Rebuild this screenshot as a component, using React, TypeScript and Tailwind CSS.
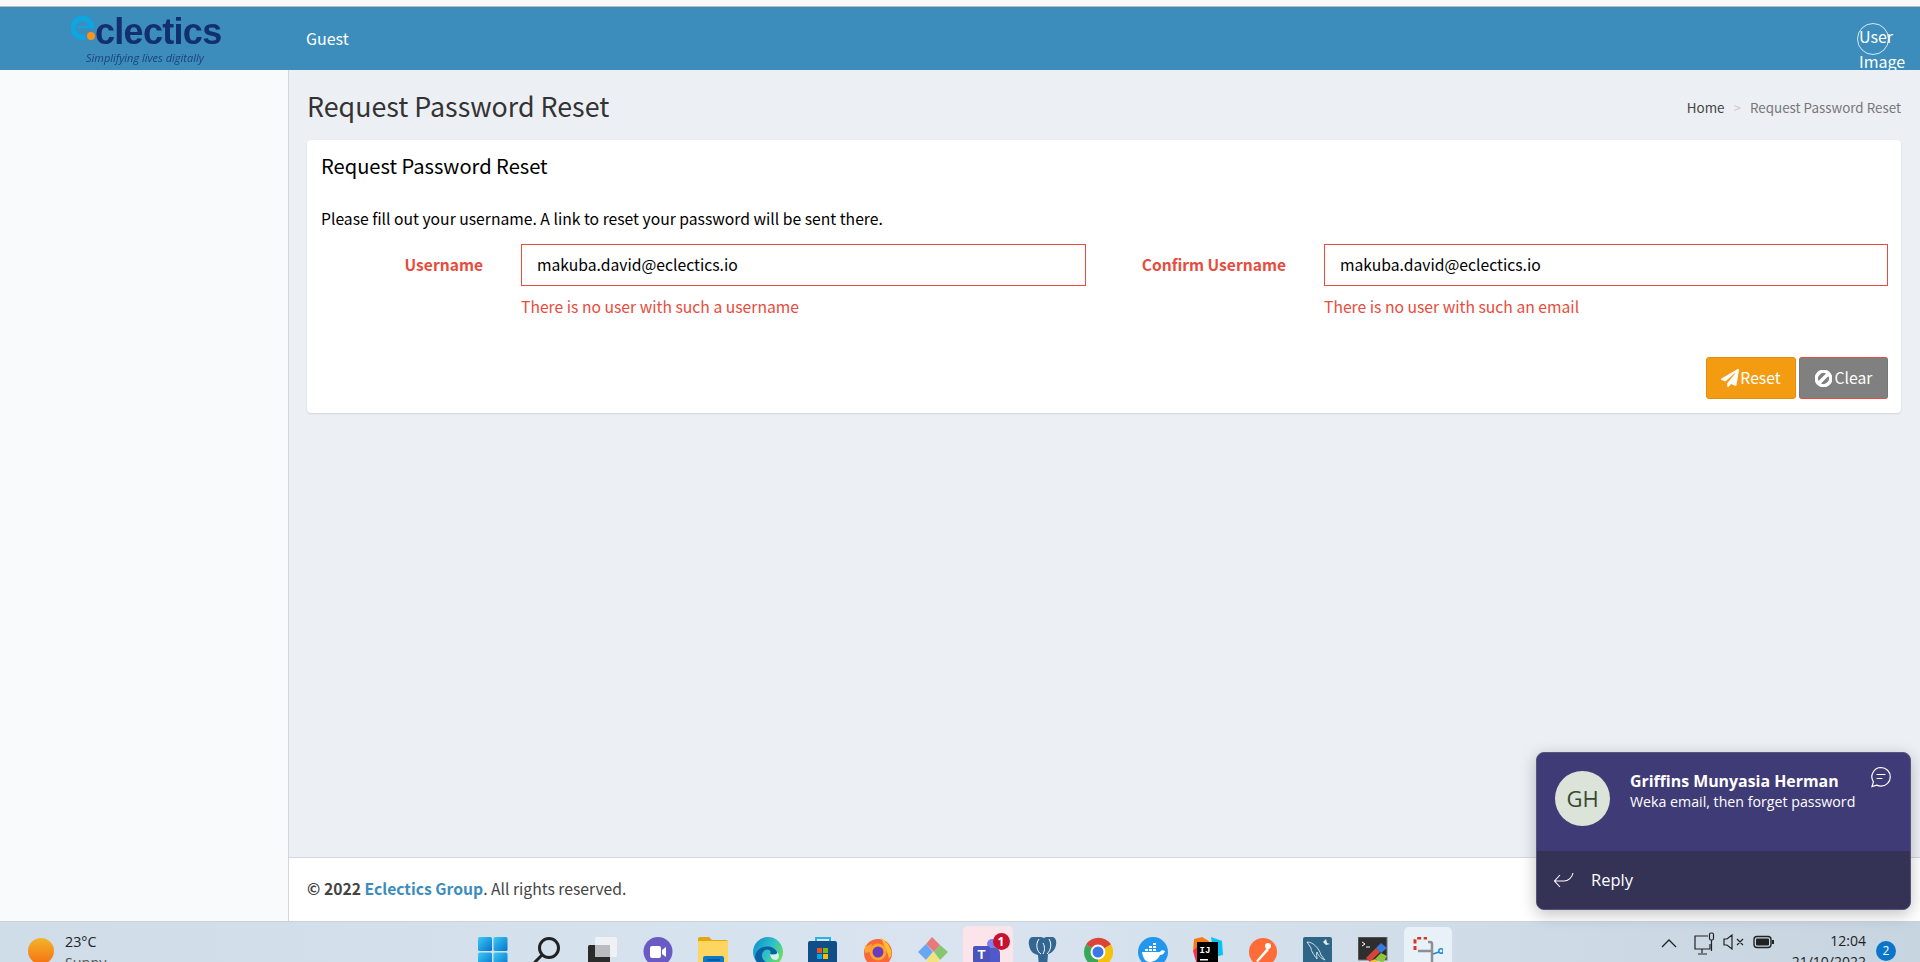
import { FaPaperPlane, FaBan } from "react-icons/fa";

function Logo() {
  return (
    <div className="w-[288px] h-full shrink-0 relative">
      <svg className="absolute left-[71px] top-[8px]" width="26" height="27" viewBox="0 0 26 27">
        <path d="M21 12H7" fill="none" stroke="#0ea5e0" strokeWidth="2.5" />
        <path d="M21 13A9.5 9.5 0 1 0 14 22" fill="none" stroke="#0ea5e0" strokeWidth="5.5" />
        <circle cx="20" cy="21" r="4" fill="#f7941d" />
      </svg>
      <span className="absolute left-[95px] top-[3px] font-['Liberation_Sans',sans-serif] font-bold text-[36px] leading-[44px] tracking-[-0.7px] text-[#12306e] blur-[0.4px]">
        clectics
      </span>
      <span className="absolute left-[86px] top-[44px] font-['Open_Sans',sans-serif] italic text-[11px] leading-[14px] text-[#1c4178] blur-[0.3px]">
        Simplifying lives digitally
      </span>
    </div>
  );
}

function Header() {
  return (
    <header className="h-[63px] shrink-0 bg-[#3c8dbc] flex items-center text-white">
      <Logo />
      <span className="ml-[18px] mb-[2px] text-[16px] leading-[24px]">Guest</span>
      <div className="ml-auto mr-[31px] mb-[-1px] w-[32px] h-[32px] rounded-full border border-white/80 text-[16px] leading-[25px] pl-[1px]">
        User Image
      </div>
    </header>
  );
}

function Field({ label, value, error, labelWidth }: { label: string; value: string; error: string; labelWidth: string }) {
  return (
    <div className="flex">
      <label className={`${labelWidth} mr-[38px] h-[42px] flex items-center justify-end font-bold text-[15.6px] text-[#e74c3c]`}>
        {label}
      </label>
      <div className="flex-1">
        <input
          readOnly
          value={value}
          className="w-full h-[42px] border border-[#e74c3c] pl-[15px] pb-[1px] text-[15.7px] text-black outline-none"
        />
        <div className="mt-[9px] text-[15.7px] leading-[24px] text-[#e74c3c]">{error}</div>
      </div>
    </div>
  );
}

function Content() {
  return (
    <div className="flex-1 flex flex-col min-w-0 bg-[#ecf0f5]">
      <div className="flex-1 px-[18px] pr-[19px]">
        <div className="h-[70px] flex items-center justify-between">
          <h1 className="text-[26.8px] leading-[36px] mt-[2px] text-[#333]">Request Password Reset</h1>
          <div className="flex items-center text-[13.4px] mt-[4px]">
            <span className="text-[#444]">Home</span>
            <span className="mx-[9px] text-[#ccc]">&gt;</span>
            <span className="text-[#777]">Request Password Reset</span>
          </div>
        </div>
        <div className="bg-white rounded-[4px] shadow-[0_1px_2px_rgba(0,0,0,0.12)] pl-[14px] pr-[13px] pt-[13px] pb-[14px]">
          <h3 className="text-[20.1px] leading-[26px] text-black">Request Password Reset</h3>
          <p className="mt-[28px] mb-[13px] text-[15.7px] leading-[24px] text-black">
            Please fill out your username. A link to reset your password will be sent there.
          </p>
          <div className="grid grid-cols-2 gap-x-[37px]">
            <Field labelWidth="w-[162px]" label="Username" value="makuba.david@eclectics.io" error="There is no user with such a username" />
            <Field labelWidth="w-[163px]" label="Confirm Username" value="makuba.david@eclectics.io" error="There is no user with such an email" />
          </div>
          <div className="mt-[38px] flex justify-end gap-[3px] text-white text-[15.7px]">
            <button className="w-[90px] h-[42px] rounded-[3px] bg-[#f39c12] border border-[#e08e0b] flex items-center justify-center">
              <FaPaperPlane className="w-[18px] h-[18px] mr-[1px]" />
              Reset
            </button>
            <button className="w-[89px] h-[42px] rounded-[3px] bg-[#808080] border border-[#e74c3c] border-l-[#777] border-r-[#777] flex items-center justify-center">
              <FaBan className="w-[17px] h-[17px] mr-[3px] -scale-x-100 stroke-white stroke-[40px]" />
              Clear
            </button>
          </div>
        </div>
      </div>
      <footer className="h-[64px] shrink-0 bg-white border-t border-[#d2d6de] pl-[18px] pb-[2px] flex items-center text-[15.7px] text-[#444]">
        <b>© 2022&nbsp;<span className="text-[#3c8dbc]">Eclectics Group</span></b>. All rights reserved.
      </footer>
    </div>
  );
}

function Slot({ children, active }: { children: React.ReactNode; active?: string }) {
  return (
    <div className="w-[55px] h-full flex justify-center relative">
      {active && <div className={active} />}
      <div className="relative pt-[15px]">{children}</div>
    </div>
  );
}

const taskIcons = [
  <svg key="win" width="30" height="30" viewBox="0 0 30 30">
    <defs>
      <linearGradient id="w" x1="0" y1="0" x2="1" y2="1">
        <stop offset="0" stopColor="#3ccbf6" />
        <stop offset="1" stopColor="#0672cd" />
      </linearGradient>
    </defs>
    <rect width="14" height="14" rx="1.5" fill="url(#w)" />
    <rect x="15.5" width="14" height="14" rx="1.5" fill="url(#w)" />
    <rect y="15.5" width="14" height="14" rx="1.5" fill="url(#w)" />
    <rect x="15.5" y="15.5" width="14" height="14" rx="1.5" fill="url(#w)" />
  </svg>,
  <svg key="search" width="30" height="30" viewBox="0 0 30 30" fill="none" stroke="#222" strokeWidth="3">
    <circle cx="16" cy="11" r="9.5" />
    <path d="M9 18 2 25" strokeLinecap="round" />
  </svg>,
  <svg key="tv" width="30" height="30" viewBox="0 0 30 30">
    <rect x="0" y="8" width="22" height="22" rx="1.5" fill="#2b2b2b" />
    <rect x="7" y="0" width="22" height="20" rx="1.5" fill="#f2f3f5" fillOpacity="0.9" />
    <rect x="7" y="8" width="15" height="12" fill="#b9bcc0" />
  </svg>,
  <svg key="chat" width="30" height="30" viewBox="0 0 30 30">
    <circle cx="15" cy="14.5" r="14.5" fill="#6a5bc4" />
    <rect x="7" y="9" width="11" height="12" rx="2" fill="#fff" />
    <path d="M19 13l4-3v10l-4-3z" fill="#fff" />
  </svg>,
  <svg key="folder" width="30" height="30" viewBox="0 0 30 30">
    <path d="M0 2a2 2 0 0 1 2-2h9l3 3h14a2 2 0 0 1 2 2v4H0z" fill="#e5a50f" />
    <rect y="4" width="30" height="26" rx="1" fill="#fdd662" />
    <rect x="5" y="19" width="21" height="11" rx="2" fill="#0c79c9" />
    <rect x="9" y="22" width="13" height="2" fill="#075c9e" />
  </svg>,
  <svg key="edge" width="30" height="30" viewBox="0 0 30 30">
    <defs>
      <linearGradient id="e" x1="0" y1="0" x2="1" y2="0.6">
        <stop offset="0" stopColor="#0c8bd0" />
        <stop offset="0.6" stopColor="#2fc2c8" />
        <stop offset="1" stopColor="#6edb5f" />
      </linearGradient>
    </defs>
    <circle cx="15" cy="15" r="15" fill="url(#e)" />
    <path d="M2 20C3 8 20 6 24 15c1 3-5 3-7 2 3-5-6-7-8 0-1 6 5 10 12 10-9 5-18 1-19-7z" fill="#0b5fa5" />
    <path d="M17 17c2 1 8 1 7-2 3 3 2 5 1 7-3 2-7 1-8-5z" fill="#dff5f5" fillOpacity="0.9" />
  </svg>,
  <svg key="store" width="30" height="30" viewBox="0 0 30 30">
    <path d="M8 5V1h14v4" fill="none" stroke="#27b4e8" strokeWidth="2" />
    <rect y="4" width="29" height="26" rx="2" fill="#0f4e88" />
    <rect x="9" y="11" width="5" height="5" fill="#f25022" />
    <rect x="15" y="11" width="5" height="5" fill="#7fba00" />
    <rect x="9" y="17" width="5" height="5" fill="#00a4ef" />
    <rect x="15" y="17" width="5" height="5" fill="#ffb900" />
  </svg>,
  <svg key="ff" width="30" height="30" viewBox="0 0 30 30">
    <circle cx="15" cy="16" r="14" fill="#f9683a" />
    <path d="M18 0c2 3 8 6 10 14 1 5-1 6-2 8-1-8-6-14-8-22z" fill="#ffc22e" />
    <path d="M2 8c2 2 3 0 7-1l-2 8-5 1z" fill="#ffa436" />
    <circle cx="15" cy="15" r="8.5" fill="#ffa52d" />
    <circle cx="15" cy="15" r="5.5" fill="#6c3bc0" />
  </svg>,
  <svg key="git" width="30" height="30" viewBox="0 0 30 30">
    <path d="M8 7l6-7 8 8-6 7z" fill="#e77a7a" />
    <path d="M0 15l8-8 7 8-7 8z" fill="#6aa6f2" />
    <path d="M16 15l6-7 8 7-8 8z" fill="#86c66f" />
    <path d="M8 23l7-8 7 8-7 7z" fill="#f4e27d" />
  </svg>,
  <svg key="teams" width="30" height="30" viewBox="0 0 30 30">
    <circle cx="19" cy="7" r="5" fill="#7b83eb" />
    <rect x="11" y="11" width="16" height="19" rx="5" fill="#5059c9" />
    <rect x="0" y="9" width="17" height="17" rx="2" fill="#4b53bc" />
    <text x="8.5" y="22" textAnchor="middle" fontSize="13" fontWeight="700" fontFamily="Liberation Sans" fill="#fff">T</text>
  </svg>,
  <svg key="pg" width="30" height="30" viewBox="0 0 30 30">
    <path d="M5 0c-3 0-5 3-4 8 1 6 4 9 9 10l1 12h8l1-13c4-1 7-4 8-9 1-5-1-8-4-8h-6l-2 1-3-1z" fill="#336791" />
    <path d="M11 2C7 7 9 15 13 17M21 2c3 5 2 11-2 15M15 6c2 4 2 7 0 11" fill="none" stroke="#fff" strokeWidth="1" />
  </svg>,
  <svg key="chrome" width="30" height="30" viewBox="0 0 30 30">
    <path d="M15 15 3 7.5A15 15 0 0 1 28 7.5z" fill="#db4437" />
    <path d="M15 15 28 7.5A15 15 0 0 1 15 30z" fill="#f4c20d" />
    <path d="M15 15V30A15 15 0 0 1 3 7.5z" fill="#3aa757" />
    <circle cx="15" cy="15" r="7.5" fill="#fff" />
    <circle cx="15" cy="15" r="5.5" fill="#3b78e7" />
  </svg>,
  <svg key="docker" width="30" height="30" viewBox="0 0 30 30">
    <circle cx="15" cy="15" r="15" fill="#2396ed" />
    <path d="M4 15h18c1-2 3-2 5-1-1 3-3 4-5 4-2 5-7 7-10 7-5 0-7-4-8-10z" fill="#fff" />
    <path d="M7 12h3v2H7zM11 12h3v2h-3zM15 12h3v2h-3zM11 9h3v2h-3zM15 9h3v2h-3zM15 6h3v2h-3z" fill="#fff" />
  </svg>,
  <svg key="ij" width="30" height="30" viewBox="0 0 30 30">
    <path d="M1 2 9 0l7 4-3 10H0z" fill="#f97a12" />
    <path d="M18 0l11 4 1 14-9 2z" fill="#07c3f2" />
    <path d="M0 14l8-8 10 0-4 24-10-2z" fill="#fe2857" />
    <rect x="4" y="5" width="21" height="22" fill="#000" />
    <text x="6.5" y="16" fontSize="9" fontWeight="700" fontFamily="Liberation Mono" fill="#fff">IJ</text>
    <rect x="7" y="22" width="8" height="1.5" fill="#fff" />
  </svg>,
  <svg key="postman" width="30" height="30" viewBox="0 0 30 30">
    <circle cx="15" cy="15" r="14" fill="#ff6c37" />
    <path d="M8 24 19 11l2 2L10 25z" fill="#fff" />
    <circle cx="20" cy="9" r="3" fill="#fff" />
  </svg>,
  <svg key="mysql" width="30" height="30" viewBox="0 0 30 30">
    <rect width="29" height="30" rx="2" fill="#2f6687" />
    <path d="M4 5c6 0 12 6 14 13l4 5c-5-2-7-5-8-8-1 3 0 4 0 7-3-4-6-8-6-11z" fill="none" stroke="#cfe0ea" strokeWidth="1" />
    <path d="M23 2l1 4 3 1-4 1-3-3z" fill="#e8eef2" />
  </svg>,
  <svg key="term" width="30" height="30" viewBox="0 0 30 30">
    <rect y="0" width="29" height="23" fill="#2e2e2e" stroke="#777" strokeWidth="1" />
    <path d="M4 5l3 2-3 2M8 10h4" stroke="#fff" strokeWidth="1" fill="none" />
    <path d="M8 21 18 11l4 4-10 10z" fill="#d8433a" />
    <path d="M18 11l5-5 6 5-6 5z" fill="#3a7ad8" />
    <path d="M17 22l6-6 6 3-4 7z" fill="#8cc63f" />
    <path d="M12 25l5-3 4 4-5 4z" fill="#f2c230" />
  </svg>,
  <svg key="snip" width="30" height="30" viewBox="0 0 30 30">
    <path d="M2 13V3a2 2 0 0 1 2-2h10" fill="none" stroke="#d8361f" strokeWidth="3" strokeDasharray="4 2.5" />
    <path d="M15 5h2a2 2 0 0 1 2 2v18M5 14h15" stroke="#8d8f93" strokeWidth="2.5" fill="none" />
    <path d="M20 17 26 15" stroke="#1f88d8" strokeWidth="1.5" />
    <circle cx="28" cy="14" r="2.2" fill="none" stroke="#1f88d8" strokeWidth="1.5" />
  </svg>,
];

function Taskbar() {
  return (
    <div className="h-[41px] shrink-0 flex overflow-hidden border-t border-[#c9d3de] bg-gradient-to-r from-[#cfdde9] via-[#d9e4f0] to-[#c7d5e1] font-['Open_Sans',sans-serif]">
      <div className="w-[465px] shrink-0 flex pl-[28px]">
        <div className="w-[26px] h-[26px] mt-[16px] rounded-full bg-gradient-to-b from-[#f2b42b] to-[#f4700f]" />
        <div className="ml-[11px] mt-[9px] text-[14.3px] leading-[21px]">
          <div className="text-[#222]">23°C</div>
          <div className="text-[#555]">Sunny</div>
        </div>
      </div>
      <div className="w-[990px] shrink-0 flex">
        {taskIcons.map((icon, i) => (
          <Slot
            key={i}
            active={
              i === 9
                ? "absolute left-[3px] w-[50px] top-[4px] h-[50px] rounded-[5px] bg-[#fbe5ea]"
                : i === 17
                  ? "absolute left-[4px] w-[48px] top-[5px] h-[50px] rounded-[5px] bg-[#e9f1f8]"
                  : undefined
            }
          >
            {icon}
            {i === 9 && (
              <span className="absolute left-[20px] top-[11px] w-[17px] h-[17px] rounded-full bg-[#c4122f] text-white text-[12px] font-bold leading-[17px] text-center">
                1
              </span>
            )}
          </Slot>
        ))}
      </div>
      <div className="flex-1 flex pl-[205px] text-[#222]">
        <svg className="mt-[15px]" width="18" height="14" viewBox="0 0 18 14" fill="none" stroke="#222" strokeWidth="1.3">
          <path d="M2 10 9 3l7 7" />
        </svg>
        <svg className="ml-[16px] mt-[9px]" width="22" height="24" viewBox="0 0 22 24" fill="none" stroke="#222" strokeWidth="1.2">
          <path d="M14 5H1v13h15v-5M8 18v4M4 23h9" />
          <rect x="15.5" y="2" width="4" height="7" rx="1.5" />
          <path d="M17.5 9v11" />
        </svg>
        <svg className="ml-[7px] mt-[12px]" width="22" height="16" viewBox="0 0 22 16" fill="none" stroke="#222" strokeWidth="1.2">
          <path d="M1 5v6h3l5 4V1L4 5zM14 5l6 6M20 5l-6 6" />
        </svg>
        <svg className="ml-[8px] mt-[13px]" width="22" height="14" viewBox="0 0 22 14">
          <rect x="1" y="1.5" width="17" height="11" rx="3" fill="none" stroke="#222" strokeWidth="1.4" />
          <rect x="3" y="3.5" width="13" height="7" rx="1" fill="#222" />
          <rect x="19" y="5" width="2" height="4" fill="#222" />
        </svg>
        <div className="w-[91px] mt-[8px] text-right text-[14px] leading-[21px] text-[#222]">
          <div>12:04</div>
          <div>21/10/2022</div>
        </div>
        <div className="ml-[10px] mt-[19px] w-[20px] h-[20px] rounded-full bg-[#0b76c9] text-white text-[12px] leading-[20px] text-center">
          2
        </div>
      </div>
    </div>
  );
}

function Toast() {
  return (
    <div className="absolute right-[9px] bottom-[52px] w-[375px] h-[158px] rounded-[8px] overflow-hidden flex flex-col border border-[#55537f] bg-[#3f3b76] text-white font-['Open_Sans',sans-serif] shadow-[0_4px_16px_rgba(0,0,0,0.25)]">
      <div className="flex-1 relative flex pl-[18px] pt-[18px]">
        <div className="w-[55px] h-[55px] rounded-full bg-[#dce3d8] text-[#37492f] text-[22px] leading-[55px] text-center">GH</div>
        <div className="ml-[20px] mt-[-2px]">
          <div className="text-[15.9px] leading-[24px] font-bold">Griffins Munyasia Herman</div>
          <div className="text-[14.2px] leading-[20px] mt-[-1px]">Weka email, then forget password</div>
        </div>
        <svg className="absolute right-[18px] top-[13px]" width="22" height="22" viewBox="0 0 22 22" fill="none" stroke="#fff" strokeWidth="1.2">
          <path d="M11 1.5a9.3 9.3 0 0 1 0 18.6c-1.6 0-3-.4-4.3-1L2 20.5l1.4-4.6A9.3 9.3 0 0 1 11 1.5z" />
          <path d="M7 8.5h8M7 12.5h5" strokeLinecap="round" />
        </svg>
      </div>
      <div className="h-[58px] shrink-0 bg-[#343356] flex items-center pl-[16px]">
        <svg width="21" height="16" viewBox="0 0 21 16" fill="none" stroke="#fff" strokeWidth="1.1">
          <path d="M20 1c-1 5-5 8-9 8H1.5M7 3 1.5 9 7 15" />
        </svg>
        <span className="ml-[17px] text-[16.5px]">Reply</span>
      </div>
    </div>
  );
}

export default function App() {
  return (
    <div className="relative h-screen flex flex-col overflow-hidden font-['Noto_Sans_CJK_SC',sans-serif]">
      <div className="h-[7px] shrink-0 bg-[#f9f9fb] border-b border-[#bdbdbd]" />
      <Header />
      <div className="flex-1 flex min-h-0">
        <aside className="w-[289px] shrink-0 bg-[#f9fafc] border-r border-[#d2d6de]" />
        <Content />
      </div>
      <Taskbar />
      <Toast />
    </div>
  );
}
